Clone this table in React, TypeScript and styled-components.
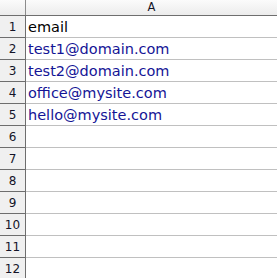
import styled, { createGlobalStyle } from "styled-components";

const GlobalStyle = createGlobalStyle`
  html, body {
    margin: 0;
    padding: 0;
    background: #ffffff;
  }
`;

const Sheet = styled.div`
  width: 277px;
  height: 278px;
  overflow: hidden;
  font-family: "DejaVu Sans", Verdana, sans-serif;
`;

const HeaderRow = styled.div`
  display: grid;
  grid-template-columns: 26px 1fr;
  height: 16px;
  border-bottom: 1px solid #6e6e6e;
  box-sizing: border-box;
  background: linear-gradient(#fbfbfb, #ececec);
`;

const Corner = styled.div`
  border-right: 1px solid #8c8c8c;
`;

const ColHead = styled.div`
  display: flex;
  align-items: center;
  justify-content: center;
  font-size: 11.5px;
  color: #141428;
  line-height: 15px;
`;

const Row = styled.div`
  display: grid;
  grid-template-columns: 26px 1fr;
  height: 22px;
`;

const RowHead = styled.div`
  display: flex;
  align-items: center;
  justify-content: center;
  background: #f0f0f0;
  border-right: 1px solid #6e6e6e;
  border-bottom: 1px solid #6e6e6e;
  font-size: 12px;
  color: #141428;
  box-sizing: border-box;
`;

const Cell = styled.div<{ $link?: boolean }>`
  display: flex;
  align-items: center;
  padding-left: 2px;
  border-bottom: 1px solid #c0c0c0;
  box-sizing: border-box;
  font-size: 14.5px;
  color: ${(p) => (p.$link ? "#141496" : "#000000")};
  white-space: nowrap;
`;

const data = [
  "email",
  "test1@domain.com",
  "test2@domain.com",
  "office@mysite.com",
  "hello@mysite.com",
];

const App = () => {
  const rows = Array.from({ length: 12 }, (_, i) => data[i] ?? "");
  return (
    <>
      <GlobalStyle />
      <Sheet>
        <HeaderRow>
          <Corner />
          <ColHead>A</ColHead>
        </HeaderRow>
        {rows.map((value, i) => (
          <Row key={i}>
            <RowHead>{i + 1}</RowHead>
            <Cell $link={i > 0}>{value}</Cell>
          </Row>
        ))}
      </Sheet>
    </>
  );
};

export default App;
